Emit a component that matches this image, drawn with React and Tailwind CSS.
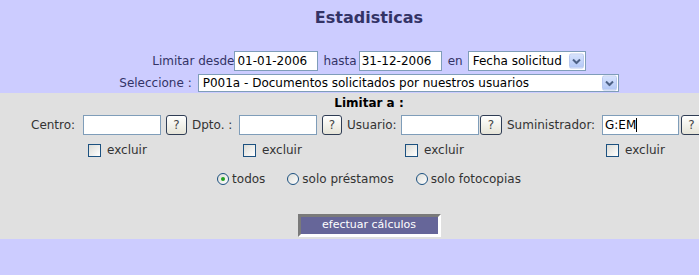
import React from 'react';

const SelectArrow = () => (
  <div className="absolute right-[1px] top-1/2 -translate-y-1/2 w-[15px] h-[15px] rounded-[2px] border border-[#b9c9ef] bg-gradient-to-b from-[#d6e2fd] to-[#b4c8f6] flex items-center justify-center">
    <svg width="9" height="6" viewBox="0 0 9 6">
      <path d="M1 1 L4.5 4.5 L8 1" fill="none" stroke="#4d6185" strokeWidth="2" />
    </svg>
  </div>
);

const Select = ({ value, className }) => (
  <div className={`relative bg-white border border-[#7f9db9] flex items-center pl-[4px] text-[12px] text-black whitespace-nowrap ${className}`}>
    {value}
    <SelectArrow />
  </div>
);

const TextInput = ({ value, className, caret }) => (
  <div className={`bg-white border border-[#7f9db9] h-[20px] flex items-center pl-[2px] text-[12px] text-black whitespace-nowrap ${className}`}>
    {value}
    {caret && <span className="inline-block w-[1px] h-[14px] bg-black" />}
  </div>
);

const HelpButton = ({ className }) => (
  <div className={`h-[20px] rounded-[3px] border border-[#2f3d55] bg-gradient-to-b from-white to-[#e6e4d8] flex items-center justify-center text-[12px] text-[#444] ${className}`}>
    ?
  </div>
);

const Checkbox = ({ className }) => (
  <div className={`flex items-center ${className}`}>
    <div className="w-[13px] h-[13px] border border-[#1c5180] bg-gradient-to-br from-[#dcdcd7] to-white" />
    <span className="ml-[6px] text-[12px] text-[#333]">excluir</span>
  </div>
);

const Radio = ({ checked, label }) => (
  <div className="flex items-center">
    <div className="w-[12px] h-[12px] rounded-full border border-[#1c5180] bg-gradient-to-br from-[#dcdcd7] to-white flex items-center justify-center">
      {checked && <div className="w-[4px] h-[4px] rounded-full bg-[#21a121]" />}
    </div>
    <span className="ml-[3px] text-[12px] text-[#333]">{label}</span>
  </div>
);

const App = () => {
  return (
    <div className="w-[699px] h-[275px] overflow-hidden bg-[#ccccff] font-['DejaVu_Sans',Verdana,sans-serif]">
      <div className="w-[738px]">
        {/* Top */}
        <div className="flex flex-col items-center pt-[8px] h-[93px]">
          <h1 className="text-[16px] leading-[20px] font-bold text-[#333366]">Estadisticas</h1>
          <div className="mt-[23px] flex items-center h-[20px] text-[12px] text-[#333366]">
            <span>Limitar desde</span>
            <TextInput value="01-01-2006" className="w-[84px]" />
            <span className="ml-[5px]">hasta</span>
            <TextInput value="31-12-2006" className="w-[83px] ml-[2px]" />
            <span className="ml-[6px]">en</span>
            <Select value="Fecha solicitud" className="w-[118px] h-[20px] ml-[5px]" />
          </div>
          <div className="mt-[3px] flex items-center h-[18px] text-[12px] text-[#333366]">
            <span>Seleccione :</span>
            <Select value="P001a - Documentos solicitados por nuestros usuarios" className="w-[421px] h-[18px] ml-[6px]" />
          </div>
        </div>

        {/* Filters panel */}
        <div className="bg-[#e0e0e0] h-[146px] flex flex-col items-center pt-[3px]">
          <div className="text-[12px] leading-[14px] font-bold text-black">Limitar a :</div>

          <div className="mt-[5px] grid grid-cols-[52px_78px_31px_47px_78px_30px_54px_78px_28px_95px_78px_27px] items-center text-[12px] text-[#333]">
            <span className="whitespace-nowrap">Centro:</span>
            <TextInput className="w-[78px]" />
            <HelpButton className="w-[21px] ml-[5px]" />
            <span className="whitespace-nowrap">Dpto. :</span>
            <TextInput className="w-[78px]" />
            <HelpButton className="w-[20px] ml-[5px]" />
            <span className="whitespace-nowrap">Usuario:</span>
            <TextInput className="w-[78px]" />
            <HelpButton className="w-[22px] ml-[1px]" />
            <span className="whitespace-nowrap">Suministrador:</span>
            <TextInput value="G:EM" caret className="w-[77px]" />
            <HelpButton className="w-[21px] ml-[1px]" />

            <div className="h-[16px] mt-[6px]" />
            <Checkbox className="col-span-2 ml-[5px] mt-[6px]" />
            <div className="mt-[6px]" />
            <Checkbox className="col-span-2 ml-[4px] mt-[6px]" />
            <div className="mt-[6px]" />
            <Checkbox className="col-span-2 ml-[4px] mt-[6px]" />
            <div className="mt-[6px]" />
            <Checkbox className="col-span-2 ml-[4px] mt-[6px]" />
          </div>

          <div className="mt-[11px] flex items-center gap-[22px]">
            <Radio checked label="todos" />
            <Radio label="solo préstamos" />
            <Radio label="solo fotocopias" />
          </div>

          <button className="mt-[26px] w-[143px] h-[23px] bg-[#666699] text-white text-[11px] border-[3px] border-t-[#7a7a7a] border-l-[#7a7a7a] border-r-white border-b-white flex items-center justify-center">
            efectuar cálculos
          </button>
        </div>
      </div>
    </div>
  );
};

export default App;
